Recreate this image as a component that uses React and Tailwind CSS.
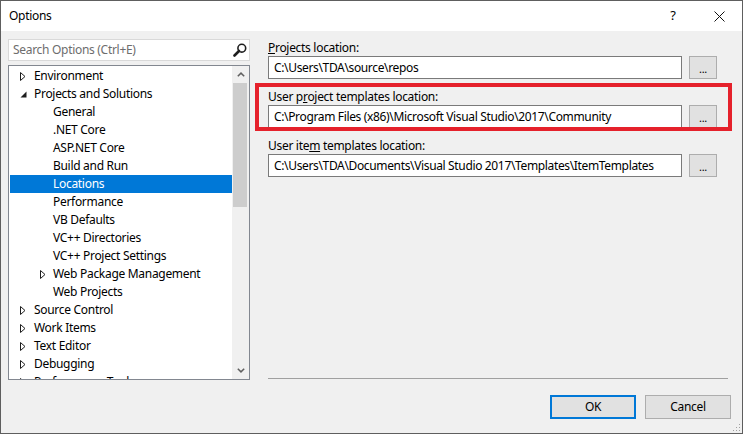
import React from "react";

const Collapsed = () => (
  <svg width="6" height="9" viewBox="0 0 6 9" className="block">
    <path d="M0.5 0.5 L5 4.5 L0.5 8.5 Z" fill="white" stroke="#1e1e1e" strokeWidth="1" />
  </svg>
);

const Expanded = () => (
  <svg width="7" height="7" viewBox="0 0 7 7" className="block">
    <path d="M6.5 0.5 L6.5 6.5 L0.5 6.5 Z" fill="#1e1e1e" />
  </svg>
);

const items = [
  { t: "Environment", l: 0, s: "c" },
  { t: "Projects and Solutions", l: 0, s: "e" },
  { t: "General", l: 1 },
  { t: ".NET Core", l: 1 },
  { t: "ASP.NET Core", l: 1 },
  { t: "Build and Run", l: 1 },
  { t: "Locations", l: 1, sel: true },
  { t: "Performance", l: 1 },
  { t: "VB Defaults", l: 1 },
  { t: "VC++ Directories", l: 1 },
  { t: "VC++ Project Settings", l: 1 },
  { t: "Web Package Management", l: 1, s: "c" },
  { t: "Web Projects", l: 1 },
  { t: "Source Control", l: 0, s: "c" },
  { t: "Work Items", l: 0, s: "c" },
  { t: "Text Editor", l: 0, s: "c" },
  { t: "Debugging", l: 0, s: "c" },
  { t: "Performance Tools", l: 0, s: "c" },
];

function Row({ it }) {
  return (
    <div
      className={
        "relative h-[18px] flex items-center shrink-0 " +
        (it.sel ? "bg-[#0078d7] text-white" : "text-black")
      }
    >
      {it.s && (
        <span
          className={
            "absolute top-0 h-[18px] flex items-center " +
            (it.l === 0 ? "left-[10px]" : "left-[30px]")
          }
        >
          {it.s === "c" ? <Collapsed /> : <Expanded />}
        </span>
      )}
      <span className={"whitespace-nowrap " + (it.l === 0 ? "pl-[24px]" : "pl-[43px]")}>{it.t}</span>
    </div>
  );
}

function PathRow({ label, value }) {
  return (
    <div className="flex flex-col">
      <div className="h-[16px] leading-[18px] text-black">{label}</div>
      <div className="mt-[1px] flex items-center">
        <div className="w-[414px] h-[23px] bg-white border border-[#7a7a7a] flex items-center pl-[5px] text-black whitespace-nowrap overflow-hidden tracking-[-0.35px]">
          {value}
        </div>
        <div className="ml-[7px] w-[28px] h-[23px] bg-[#e1e1e1] border border-[#adadad] flex items-center justify-center text-[11px] leading-none pt-[2px] text-black">
          ...
        </div>
      </div>
    </div>
  );
}

export default function App() {
  return (
    <div className="relative w-[743px] h-[434px] border border-[#5e5e5e] bg-[#f0f0f0] flex flex-col overflow-hidden font-['Noto_Sans',sans-serif] text-[12px] tracking-[-0.3px]">
      {/* title bar */}
      <div className="h-[30px] bg-white flex items-center shrink-0">
        <span className="pl-[8px] text-black">Options</span>
        <div className="ml-auto flex h-full">
          <div className="w-[46px] h-full flex items-center justify-center text-[13px] text-black">?</div>
          <div className="w-[46px] h-full flex items-center justify-center">
            <svg width="11" height="11" viewBox="0 0 11 11">
              <path d="M0.5 0.5 L10.5 10.5 M10.5 0.5 L0.5 10.5" stroke="#111" strokeWidth="1" />
            </svg>
          </div>
        </div>
      </div>

      {/* body */}
      <div className="flex-1 flex pl-[7px] pt-[8px]">
        {/* left column */}
        <div className="w-[242px] flex flex-col">
          <div className="h-[22px] bg-white border border-[#d9d9d9] flex items-center pl-[4px] pr-[2px]">
            <span className="text-[#6d6d6d] flex-1">Search Options (Ctrl+E)</span>
            <svg width="14" height="15" viewBox="0 0 14 15">
              <circle cx="8.8" cy="5.2" r="3.9" fill="none" stroke="#1e1e1e" strokeWidth="1.6" />
              <path d="M6 8 L1.5 12.5" stroke="#1e1e1e" strokeWidth="2.6" strokeLinecap="round" />
            </svg>
          </div>
          <div className="mt-[4px] h-[315px] bg-white border border-[#828790] flex">
            <div className="flex-1 flex flex-col overflow-hidden pl-[1px] pt-[1px]">
              {items.map((it, i) => (
                <Row key={i} it={it} />
              ))}
            </div>
            <div className="w-[17px] bg-[#f0f0f0] flex flex-col items-center">
              <div className="h-[17px] w-full flex items-center justify-center">
                <svg width="8" height="5" viewBox="0 0 8 5">
                  <path d="M0.8 4.3 L4 1.1 L7.2 4.3" fill="none" stroke="#606060" strokeWidth="1.5" />
                </svg>
              </div>
              <div className="w-[14px] h-[124px] bg-[#cdcdcd] mr-[1px]" />
              <div className="flex-1" />
              <div className="h-[17px] w-full flex items-center justify-center">
                <svg width="8" height="5" viewBox="0 0 8 5">
                  <path d="M0.8 0.7 L4 3.9 L7.2 0.7" fill="none" stroke="#606060" strokeWidth="1.5" />
                </svg>
              </div>
            </div>
          </div>
        </div>

        {/* right column */}
        <div className="ml-[18px] w-[463px] flex flex-col">
          <div className="flex flex-col gap-[9px]">
            <PathRow
              label={<><span className="underline">P</span>rojects location:</>}
              value="C:\Users\TDA\source\repos"
            />
            <PathRow
              label={<>User p<span className="underline">r</span>oject templates location:</>}
              value="C:\Program Files (x86)\Microsoft Visual Studio\2017\Community"
            />
            <PathRow
              label={<>User ite<span className="underline">m</span> templates location:</>}
              value="C:\Users\TDA\Documents\Visual Studio 2017\Templates\ItemTemplates"
            />
          </div>
          <div className="flex-1" />
          <div className="w-[460px] h-px bg-[#a0a0a0]" />
          <div className="mt-[16px] mb-[14px] flex justify-end gap-[9px]">
            <div className="w-[86px] h-[24px] bg-[#e1e1e1] border-2 border-[#0078d7] flex items-center justify-center text-black">
              OK
            </div>
            <div className="w-[86px] h-[24px] bg-[#e1e1e1] border border-[#adadad] flex items-center justify-center text-black">
              Cancel
            </div>
          </div>
        </div>
      </div>

      {/* red annotation box */}
      <div className="absolute left-[254px] top-[82px] w-[477px] h-[48px] border-[4px] border-[#e5212b] pointer-events-none" />

      {/* resize grip */}
      <svg className="absolute right-[1px] bottom-[1px]" width="9" height="9" viewBox="0 0 9 9">
        <rect x="7" y="1" width="1" height="1" fill="#a0a0a0" />
        <rect x="4" y="4" width="1" height="1" fill="#a0a0a0" />
        <rect x="7" y="4" width="1" height="1" fill="#a0a0a0" />
        <rect x="1" y="7" width="1" height="1" fill="#a0a0a0" />
        <rect x="4" y="7" width="1" height="1" fill="#a0a0a0" />
        <rect x="7" y="7" width="1" height="1" fill="#a0a0a0" />
      </svg>
    </div>
  );
}
